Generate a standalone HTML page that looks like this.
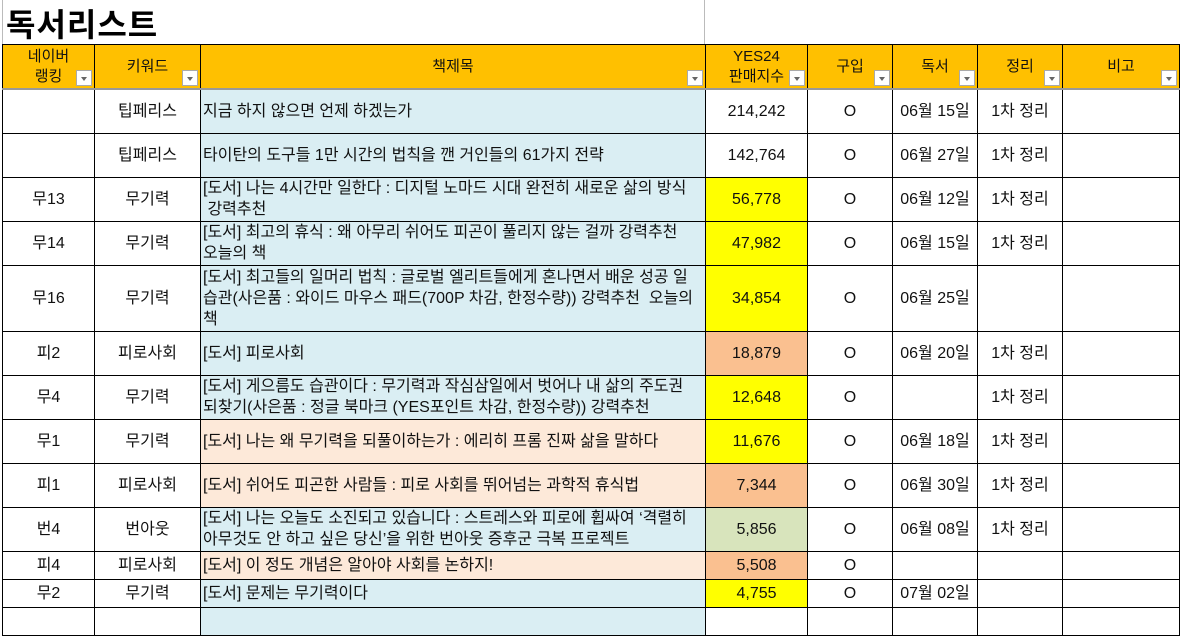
<!DOCTYPE html>
<html><head><meta charset="utf-8"><style>
body{margin:0;width:1183px;height:611px;overflow:hidden;background:#fff;font-family:"Liberation Sans","Noto Sans CJK KR",sans-serif;}
.title{position:absolute;left:6px;top:0px;font-size:32px;font-weight:bold;letter-spacing:1px}
.vl{position:absolute;left:704px;top:0;width:1px;height:44px;background:#bbb}
.vl0{position:absolute;left:2px;top:0;width:1px;height:44px;background:#bbb}
table{position:absolute;left:2px;top:44px;width:1177px;border-collapse:collapse;table-layout:fixed;font-size:16px;letter-spacing:0;color:#111}
td{border:1px solid #000;padding:0;text-align:center;line-height:21px;overflow:hidden;position:relative;white-space:nowrap}
tr.h td{background:#FFC000;height:43px;border-bottom:2px solid #999;line-height:20px;font-size:15px;letter-spacing:0}
td.t{text-align:left;padding-left:2px}
.b{background:#DAEEF3}.p{background:#FDE9D9}.y{background:#FFFF00}.o{background:#FAC090}.g{background:#D8E4BC}
.dd{position:absolute;right:2px;bottom:2px;width:16px;height:16px;background:#fff;border:1px solid #aaa;box-sizing:border-box}
.dd:after{content:"";position:absolute;left:4px;top:6px;border-left:3px solid transparent;border-right:3px solid transparent;border-top:4px solid #666}
</style></head><body>
<div class="vl0"></div><div class="title">독서리스트</div><div class="vl"></div>
<table>
<colgroup><col style="width:92px"><col style="width:106px"><col style="width:505px"><col style="width:102px"><col style="width:85px"><col style="width:85px"><col style="width:85px"><col style="width:117px"></colgroup>
<tr class="h"><td>네이버<br>랭킹<span class="dd"></span></td><td>키워드<span class="dd"></span></td><td>책제목<span class="dd"></span></td><td>YES24<br>판매지수<span class="dd"></span></td><td>구입<span class="dd"></span></td><td>독서<span class="dd"></span></td><td>정리<span class="dd"></span></td><td>비고<span class="dd"></span></td></tr>
<tr style="height:44px"><td></td><td>팁페리스</td><td class="t b">지금 하지 않으면 언제 하겠는가</td><td>214,242</td><td>O</td><td>06월 15일</td><td>1차 정리</td><td></td></tr>
<tr style="height:44px"><td></td><td>팁페리스</td><td class="t b">타이탄의 도구들 1만 시간의 법칙을 깬 거인들의 61가지 전략</td><td>142,764</td><td>O</td><td>06월 27일</td><td>1차 정리</td><td></td></tr>
<tr style="height:44px"><td>무13</td><td>무기력</td><td class="t b">[도서] 나는 4시간만 일한다 : 디지털 노마드 시대 완전히 새로운 삶의 방식<br>&nbsp;강력추천</td><td class="y">56,778</td><td>O</td><td>06월 12일</td><td>1차 정리</td><td></td></tr>
<tr style="height:44px"><td>무14</td><td>무기력</td><td class="t b">[도서] 최고의 휴식 : 왜 아무리 쉬어도 피곤이 풀리지 않는 걸까 강력추천<br>오늘의 책</td><td class="y">47,982</td><td>O</td><td>06월 15일</td><td>1차 정리</td><td></td></tr>
<tr style="height:66px"><td>무16</td><td>무기력</td><td class="t b">[도서] 최고들의 일머리 법칙 : 글로벌 엘리트들에게 혼나면서 배운 성공 일<br>습관(사은품 : 와이드 마우스 패드(700P 차감, 한정수량)) 강력추천&nbsp; 오늘의<br>책</td><td class="y">34,854</td><td>O</td><td>06월 25일</td><td></td><td></td></tr>
<tr style="height:44px"><td>피2</td><td>피로사회</td><td class="t b">[도서] 피로사회</td><td class="o">18,879</td><td>O</td><td>06월 20일</td><td>1차 정리</td><td></td></tr>
<tr style="height:44px"><td>무4</td><td>무기력</td><td class="t b">[도서] 게으름도 습관이다 : 무기력과 작심삼일에서 벗어나 내 삶의 주도권<br>되찾기(사은품 : 정글 북마크 (YES포인트 차감, 한정수량)) 강력추천</td><td class="y">12,648</td><td>O</td><td></td><td>1차 정리</td><td></td></tr>
<tr style="height:44px"><td>무1</td><td>무기력</td><td class="t p">[도서] 나는 왜 무기력을 되풀이하는가 : 에리히 프롬 진짜 삶을 말하다</td><td class="y">11,676</td><td>O</td><td>06월 18일</td><td>1차 정리</td><td></td></tr>
<tr style="height:44px"><td>피1</td><td>피로사회</td><td class="t p">[도서] 쉬어도 피곤한 사람들 : 피로 사회를 뛰어넘는 과학적 휴식법</td><td class="o">7,344</td><td>O</td><td>06월 30일</td><td>1차 정리</td><td></td></tr>
<tr style="height:44px"><td>번4</td><td>번아웃</td><td class="t b">[도서] 나는 오늘도 소진되고 있습니다 : 스트레스와 피로에 휩싸여 ‘격렬히<br>아무것도 안 하고 싶은 당신’을 위한 번아웃 증후군 극복 프로젝트</td><td class="g">5,856</td><td>O</td><td>06월 08일</td><td>1차 정리</td><td></td></tr>
<tr style="height:28px"><td>피4</td><td>피로사회</td><td class="t p">[도서] 이 정도 개념은 알아야 사회를 논하지!</td><td class="o">5,508</td><td>O</td><td></td><td></td><td></td></tr>
<tr style="height:28px"><td>무2</td><td>무기력</td><td class="t b">[도서] 문제는 무기력이다</td><td class="y">4,755</td><td>O</td><td>07월 02일</td><td></td><td></td></tr>
<tr style="height:28px"><td></td><td></td><td class="b"></td><td></td><td></td><td></td><td></td><td></td></tr>
</table>
</body></html>
